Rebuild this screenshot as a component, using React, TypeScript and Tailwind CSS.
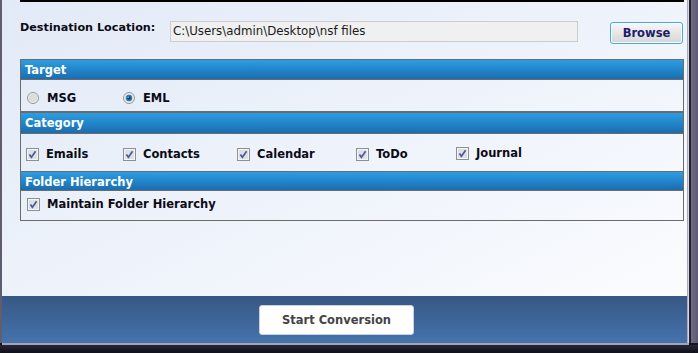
import React from 'react';

const CheckBox: React.FC = () => (
  <svg width="13" height="13" viewBox="0 0 13 13" className="shrink-0">
    <rect x="0.5" y="0.5" width="12" height="12" fill="#f4f5f7" stroke="#8e8f91" />
    <rect x="2" y="2" width="9" height="9" fill="#dde0e6" />
    <path d="M3.4 6.4 L5.4 9.2 L9.6 3.2" stroke="#4a5d96" strokeWidth="1.7" fill="none" />
  </svg>
);

const Radio: React.FC<{ checked?: boolean }> = ({ checked }) => (
  <svg width="12" height="12" viewBox="0 0 12 12" className="shrink-0">
    <circle cx="6" cy="6" r="5.5" fill="#f2f2f2" stroke="#929292" />
    <circle cx="6" cy="6" r="4" fill="#dcdcdc" />
    {checked && (
      <>
        <circle cx="6" cy="6" r="3.2" fill="#2a7fb8" />
        <circle cx="6" cy="6" r="1.8" fill="#0e3f6b" />
        <circle cx="5.2" cy="5.2" r="0.8" fill="#8fd0f5" />
      </>
    )}
  </svg>
);

const Header: React.FC<{ title: string; className?: string }> = ({ title, className = '' }) => (
  <div
    className={`h-[20px] bg-linear-to-b from-[#2c9ee3] to-[#1a6db0] border-b border-[#6b6b6b] pl-[4px] text-white font-bold text-[11.5px] leading-[20px] ${className}`}
  >
    {title}
  </div>
);

const CATEGORIES: { label: string; w: string }[] = [
  { label: 'Emails', w: 'w-[97px]' },
  { label: 'Contacts', w: 'w-[114px]' },
  { label: 'Calendar', w: 'w-[119px]' },
  { label: 'ToDo', w: 'w-[100px]' },
  { label: 'Journal', w: 'w-[100px]' },
];

export default function App() {
  return (
    <div className="w-[698px] h-[353px] flex flex-col overflow-hidden bg-[#15151f] font-['DejaVu_Sans',sans-serif] text-[#0b0b16]">
      <div className="flex h-[343px]">
        {/* left frame */}
        <div className="w-[2px] bg-[#5e5e6e]" />

        {/* content */}
        <div className="w-[685px] flex flex-col bg-linear-to-br from-[#e2eaf7] to-[#fcfdff]">
          <div className="ml-[18px] w-[664px] h-[2px] bg-black" />

          {/* Destination row */}
          <div className="flex items-start mt-[19px] pl-[18px]">
            <div className="w-[150px] font-bold text-[11.2px] leading-[14px]">Destination Location:</div>
            <div className="w-[408px] h-[21px] bg-[#f0f0f0] border border-[#cdcdcd] pl-[2px] text-[11.8px] leading-[19px] text-[#1a1a1a]">
              C:\Users\admin\Desktop\nsf files
            </div>
            <button className="ml-[32px] mt-[1px] w-[73px] h-[22px] rounded-[3px] border border-[#42abe0] bg-linear-to-b from-[#f7f7f7] to-[#d6d6d6] shadow-[inset_0_0_0_1px_#ffffff] text-[#1d1c6c] font-bold text-[11.5px] leading-[18px]">
              Browse
            </button>
          </div>

          {/* Options panel */}
          <div className="ml-[18px] mt-[15px] w-[664px] border border-[#6b6b6b] flex flex-col">
            <Header title="Target" />
            <div className="h-[31px] flex items-start pt-[11px] pl-[6px]">
              <div className="w-[96px] h-[14px] flex items-center gap-[8px]">
                <Radio />
                <span className="font-bold text-[11.5px] leading-[14px]">MSG</span>
              </div>
              <div className="h-[14px] flex items-center gap-[8px]">
                <Radio checked />
                <span className="font-bold text-[11.5px] leading-[14px]">EML</span>
              </div>
            </div>

            <Header title="Category" className="border-t-2 border-t-[#6b6b6b] h-[23px] leading-[21px]" />
            <div className="h-[37px] flex items-start pt-[13px] pl-[5px]">
              {CATEGORIES.map((c) => (
                <div
                  key={c.label}
                  className={`${c.w} h-[14px] flex items-center gap-[7px] ${c.label === 'Journal' ? '-mt-[1px]' : ''}`}
                >
                  <CheckBox />
                  <span className="font-bold text-[11.5px] leading-[14px]">{c.label}</span>
                </div>
              ))}
            </div>

            <Header title="Folder Hierarchy" className="border-t border-t-[#6b6b6b]" />
            <div className="h-[29px] flex items-start pt-[6px] pl-[6px]">
              <div className="h-[14px] flex items-center gap-[7px]">
                <CheckBox />
                <span className="font-bold text-[11.5px] leading-[14px]">Maintain Folder Hierarchy</span>
              </div>
            </div>
          </div>

          <div className="flex-1" />

          {/* Bottom bar */}
          <div className="h-[47px] bg-linear-to-b from-[#375784] to-[#4573ac] pt-[9px] pl-[257px]">
            <button className="w-[155px] h-[30px] bg-white border border-[#c9d2de] rounded-[3px] text-[#444444] font-bold text-[11.5px] leading-[28px]">
              Start Conversion
            </button>
          </div>
        </div>

        {/* right frame */}
        <div className="w-[1px] bg-[#a9a9bd]" />
        <div className="w-[1px] bg-[#d6d6e4]" />
        <div className="w-[2px] bg-[#24242f]" />
        <div className="w-[7px] bg-linear-to-r from-[#6f6d86] to-[#5c5a72]" />
      </div>
      <div className="h-[2px] ml-[2px] mr-[9px] bg-[#a4a4b6]" />
      <div className="flex-1 bg-linear-to-b from-[#26263a] to-[#101018]" />
    </div>
  );
}
